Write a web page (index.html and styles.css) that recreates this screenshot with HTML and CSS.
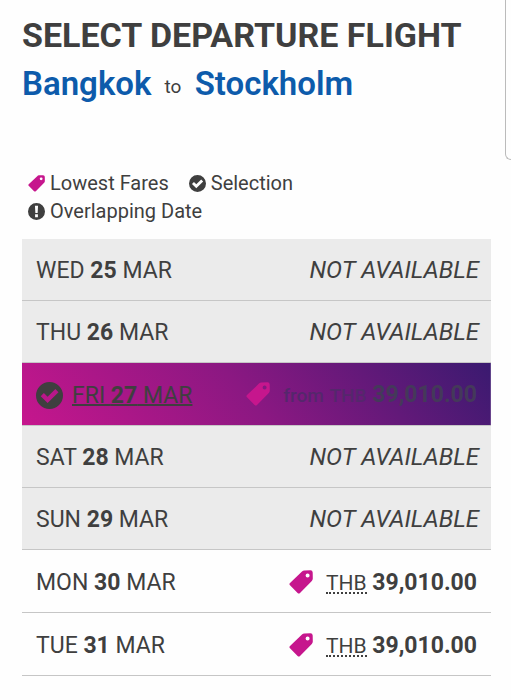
FILE: index.html
```html
<!DOCTYPE html>
<html lang="en">
<head>
	<meta charset="utf-8">
	<meta name="viewport" content="width=device-width, initial-scale=1">
	<title>Select departure flight</title>
	<link rel="stylesheet" href="styles.css">
</head>
<body>
	<!-- shared icons -->
	<svg class="sprite" aria-hidden="true">
		<symbol id="tag" viewBox="0 0 24 24">
			<path fill-rule="evenodd" d="M13 1.6Q14 .6 15.4 .5L21.4 .2Q23.6 .2 23.7 2.4L23.8 8.6Q23.8 10 22.8 11L11 22.9Q9.8 24 8.6 22.9L1 15.3Q-.1 14.2 1 13.1ZM18.6 3.4a2 2 0 1 0 0 4 2 2 0 0 0 0-4Z"/>
		</symbol>
		<symbol id="check" viewBox="0 0 24 24">
			<path fill-rule="evenodd" d="M12 0a12 12 0 1 1 0 24 12 12 0 0 1 0-24ZM4.2 12.6L10.3 18.6L20 9L17.2 6.2L10.3 13.1L7 9.8Z"/>
		</symbol>
		<symbol id="alert" viewBox="0 0 24 24">
			<path fill-rule="evenodd" d="M12 0a12 12 0 1 1 0 24 12 12 0 0 1 0-24ZM9.8 4L10.4 14H13.6L14.2 4ZM10 16V20H14V16Z"/>
		</symbol>
	</svg>

	<div class="side-panel"></div>

	<main class="page">
		<h1 class="title">SELECT DEPARTURE FLIGHT</h1>
		<h2 class="route">Bangkok <small>to</small> Stockholm</h2>

		<ul class="legend">
			<li><svg class="icon pink"><use href="#tag"/></svg>Lowest Fares</li>
			<li><svg class="icon"><use href="#check"/></svg>Selection</li>
			<li><svg class="icon"><use href="#alert"/></svg>Overlapping Date</li>
		</ul>

		<table class="dates">
			<tbody>
				<tr class="disabled">
					<th scope="row">WED <b>25</b> MAR</th>
					<td><em>NOT AVAILABLE</em></td>
				</tr>
				<tr class="disabled">
					<th scope="row">THU <b>26</b> MAR</th>
					<td><em>NOT AVAILABLE</em></td>
				</tr>
				<tr class="selected">
					<th scope="row"><svg class="icon"><use href="#check"/></svg><a href="#fri27">FRI <b>27</b> MAR</a></th>
					<td><svg class="icon"><use href="#tag"/></svg><span class="from">from</span> <abbr>THB</abbr> <b>39,010.00</b></td>
				</tr>
				<tr class="disabled">
					<th scope="row">SAT <b>28</b> MAR</th>
					<td><em>NOT AVAILABLE</em></td>
				</tr>
				<tr class="disabled">
					<th scope="row">SUN <b>29</b> MAR</th>
					<td><em>NOT AVAILABLE</em></td>
				</tr>
				<tr class="available">
					<th scope="row"><a href="#mon30">MON <b>30</b> MAR</a></th>
					<td><svg class="icon"><use href="#tag"/></svg><abbr>THB</abbr> <b>39,010.00</b></td>
				</tr>
				<tr class="available">
					<th scope="row"><a href="#tue31">TUE <b>31</b> MAR</a></th>
					<td><svg class="icon"><use href="#tag"/></svg><abbr>THB</abbr> <b>39,010.00</b></td>
				</tr>
			</tbody>
		</table>
	</main>
</body>
</html>
```
FILE: styles.css
```css
body{
	margin: 0;
	overflow-x: hidden;
	background: #fefefe;
	color: #3f3f3f;
	font-family: Roboto, "Liberation Sans", sans-serif;
}
.sprite{
	display: none;
}
.page{
	padding: 15px 20px 20px 22px;
}
.side-panel{
	position: absolute;
	top: 0;
	right: 0;
	box-sizing: border-box;
	width: 6px;
	height: 160px;
	border: 1px solid #bbb;
	border-width: 0 0 1px 1px;
	border-bottom-left-radius: 6px;
}

.title{
	margin: 0;
	font-size: 34px;
	line-height: 40px;
	font-weight: 700;
}
.route{
	margin: 9px 0 0;
	color: #0d5bab;
	font-size: 33px;
	line-height: 40px;
	font-weight: 600;
}
.route small{
	margin: 0 5px;
	color: #3f3f3f;
	font-size: 19px;
	line-height: 20px;
	font-weight: 400;
	vertical-align: 2px;
}

.legend{
	display: flex;
	flex-wrap: wrap;
	width: 300px;
	margin: 65px 0 14px;
	padding: 0 6px;
	list-style: none;
	column-gap: 20px;
	font-size: 20px;
	line-height: 28px;
}
.legend li{
	display: flex;
	align-items: center;
	gap: 5px;
}
.icon{
	flex: none;
	width: 24px;
	height: 24px;
	fill: currentColor;
}
.legend .icon{
	width: 17px;
	height: 17px;
}
.pink{
	color: #c6168d;
}

.dates{
	width: 100%;
	border-collapse: collapse;
	font-size: 23px;
	line-height: 28px;
}
.dates tr{
	height: 62px;
	box-shadow: inset 0 -1px #c6c6c6;
}
.dates th,
.dates td{
	padding: 2px 14px 0;
	font-weight: 400;
	text-align: left;
	white-space: nowrap;
}
.dates td{
	text-align: right;
}
.dates a{
	color: inherit;
	text-decoration: none;
}
.dates td .icon{
	margin-right: 13px;
	color: #c6168d;
	vertical-align: -4px;
}
.dates em{
	margin-right: -2px;
	font-size: 24px;
	line-height: 26px;
}
.dates .disabled{
	background: #ebebeb;
}
.dates .selected,
.dates .available{
	height: 63px;
}
.dates abbr{
	display: inline-block;
	border-bottom: 2px dotted #3f3f3f;
	font-size: 21px;
	line-height: 17px;
}

.dates .selected{
	background: linear-gradient(50deg, #c6168d, #8b1882 48%, #3a1a70);
}
.dates .selected th .icon{
	width: 27px;
	height: 27px;
	margin-right: 9px;
	vertical-align: -6px;
}
.dates .selected a{
	text-decoration: underline;
	text-decoration-thickness: 2px;
}
.dates .selected td{
	color: #44395a;
}
.dates .selected .from,
.dates .selected abbr{
	border-bottom-color: transparent;
	color: #55276c;
	font-size: 19px;
	font-weight: 500;
}
```
